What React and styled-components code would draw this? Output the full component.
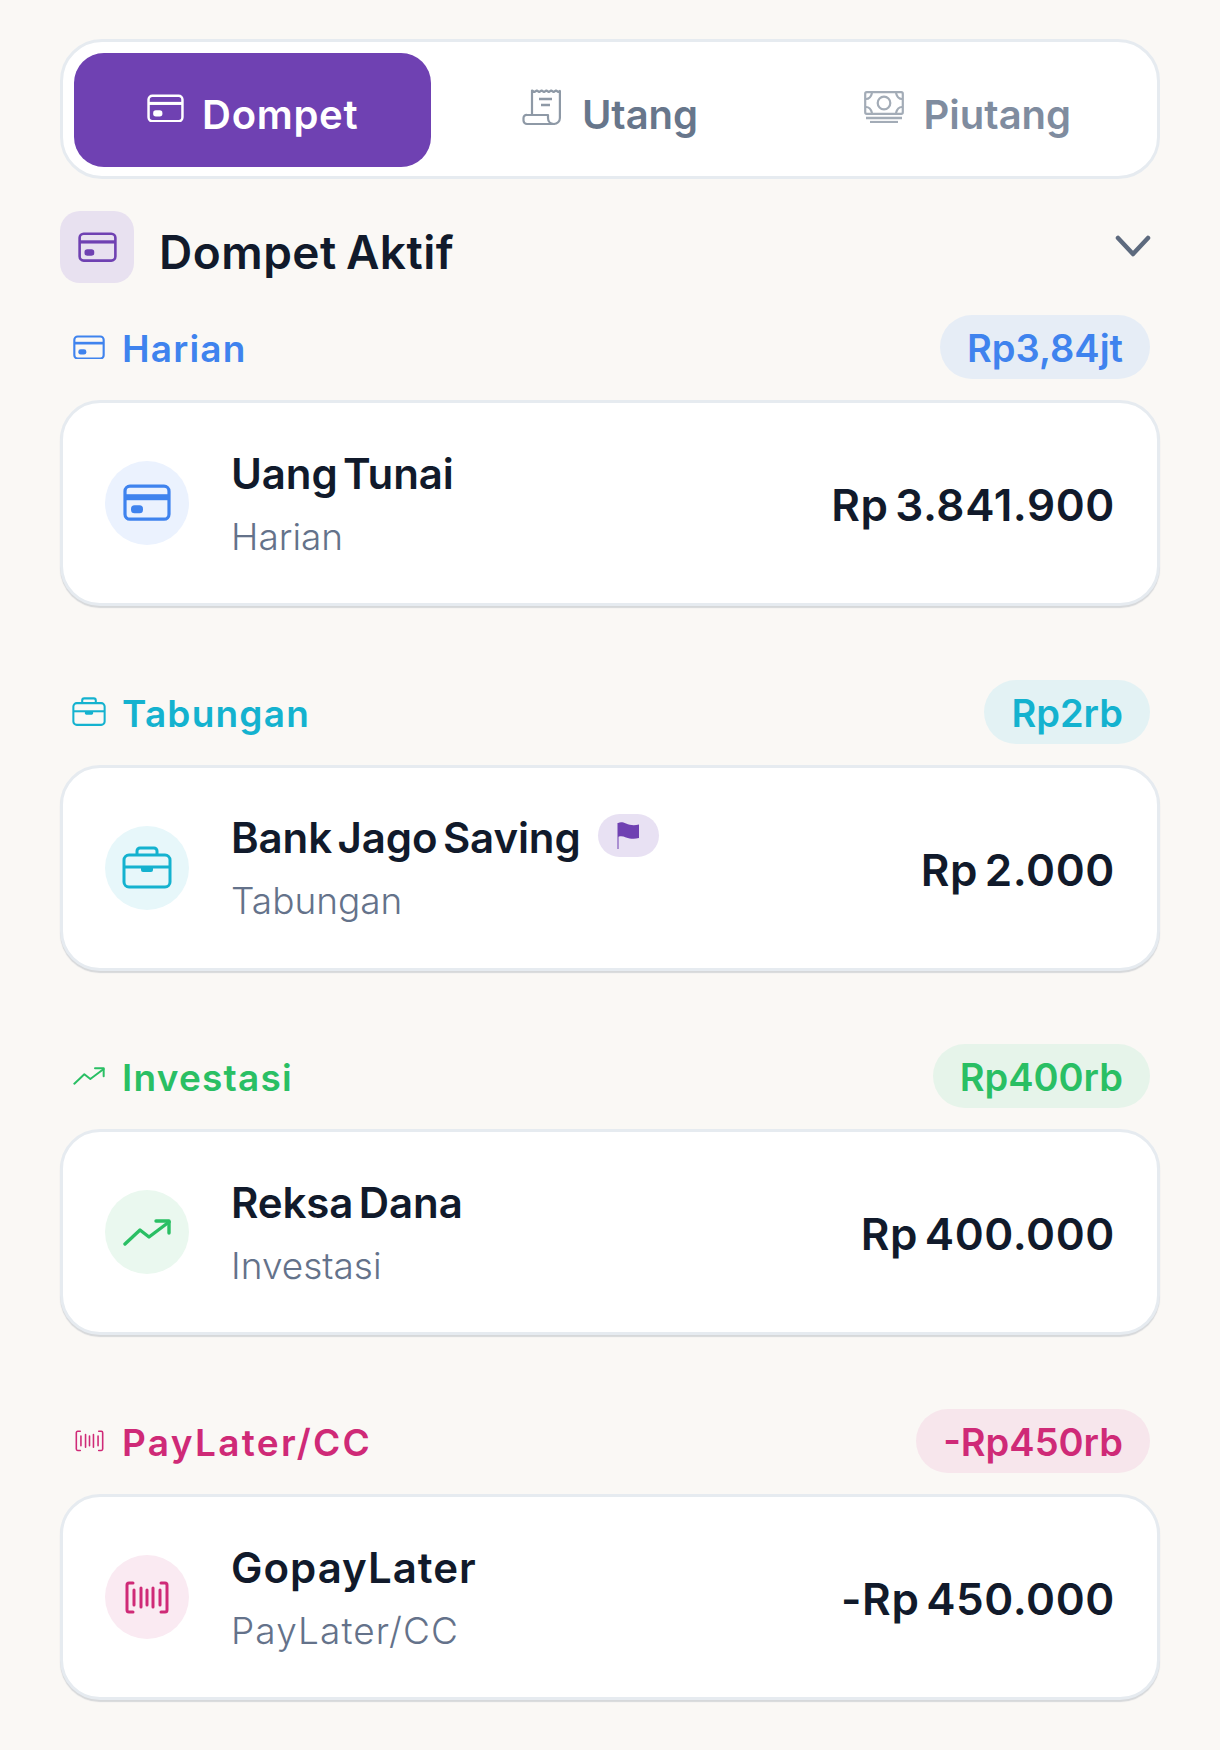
import React from "react";
import styled, { createGlobalStyle } from "styled-components";

const Global = createGlobalStyle`
  html, body { margin: 0; background: #faf8f5; }
  body { font-family: "Inter", "Noto Sans", sans-serif; }
  * { box-sizing: border-box; }
`;

const Page = styled.div`
  width: 1220px;
  height: 1750px;
  padding: 39px 60px 0;
  overflow: hidden;
  background: #faf8f5;
`;
const TabBar = styled.div`
  display: grid;
  grid-template-columns: repeat(3, 1fr);
  height: 140px;
  padding: 11px 11px 9px;
  background: #fff;
  border: 3px solid #e6ebf0;
  border-radius: 42px;
`;
const Tab = styled.div`
  display: flex;
  align-items: center;
  justify-content: center;
  gap: ${p => p.$gap}px;
  border-radius: 30px;
  background: ${p => (p.$active ? "#6f41b2" : "transparent")};
  color: ${p => p.$color};
`;
const TabLabel = styled.span`
  font-size: 40px;
  font-weight: 600;
  letter-spacing: ${p => p.$track}px;
  line-height: 46px;
  padding-top: 10px;
`;
const TabGlyph = styled.span`
  display: flex;
  color: ${p => p.$color};
  margin-top: ${p => p.$top}px;
`;
const SectionHead = styled.div`
  display: flex;
  justify-content: space-between;
  margin-top: 32px;
  height: 72px;
  padding-right: 9px;
`;
const SectionLeft = styled.div`
  display: flex;
  align-items: center;
  gap: 25px;
`;
const SectionIcon = styled.div`
  width: 74px;
  height: 72px;
  border-radius: 20px;
  background: #e8e1f0;
  color: #6f41b2;
  display: flex;
  align-items: center;
  justify-content: center;
`;
const SectionTitle = styled.h2`
  margin: 10px 0 0;
  font-size: 46px;
  font-weight: 600;
  letter-spacing: 0.5px;
  word-spacing: -3px;
  line-height: 54px;
  color: #111a2b;
`;
const Chevron = styled.svg`
  width: 36px;
  height: 22px;
  margin-top: 24px;
  color: #5d6a7e;
`;
const Group = styled.section`
  margin-top: ${p => (p.$first ? 32 : 73.7)}px;
`;
const GroupHead = styled.div`
  display: flex;
  align-items: center;
  justify-content: space-between;
  height: 64px;
  padding: 0 10px 0 13px;
  margin-bottom: 21px;
  color: ${p => p.$color};
`;
const GroupLabel = styled.div`
  display: flex;
  align-items: center;
  gap: 17px;
  font-size: 37px;
  font-weight: 600;
  letter-spacing: ${p => p.$track + 1.2}px;
  line-height: 46px;
`;
const GroupText = styled.span`
  padding-top: 4px;
`;
const GroupIcon = styled.span`
  display: flex;
  width: 32px;
  justify-content: center;
  svg { flex: none; }
`;
const Total = styled.div`
  height: 64px;
  padding: 3px 27px 0;
  border-radius: 32px;
  background: ${p => p.$bg};
  font-size: 38px;
  font-weight: 600;
  line-height: 61px;
`;
const Card = styled.div`
  display: flex;
  align-items: center;
  height: 206px;
  padding: 0 42px;
  background: #fff;
  border: 3px solid #e6ebf0;
  border-radius: 40px;
  box-shadow: 0 2px 1px rgba(30, 50, 80, 0.16);
`;
const Avatar = styled.div`
  flex: none;
  width: 84px;
  height: 84px;
  border-radius: 50%;
  background: ${p => p.$bg};
  color: ${p => p.$color};
  display: flex;
  align-items: center;
  justify-content: center;
`;
const Info = styled.div`
  flex: 1;
  margin-left: 42px;
  display: flex;
  flex-direction: column;
  gap: 14px;
  padding-top: 1px;
`;
const NameRow = styled.div`
  display: flex;
  align-items: flex-start;
  gap: 17px;
`;
const Name = styled.div`
  font-size: 42px;
  font-weight: 600;
  letter-spacing: ${p => p.$track - 0.1}px;
  word-spacing: -5px;
  line-height: 52px;
  color: #111a2b;
`;
const FlagBadge = styled.span`
  width: 61px;
  height: 43px;
  margin-top: 2px;
  border-radius: 22px;
  background: #e8e1f3;
  color: #6f41b2;
  display: flex;
  align-items: center;
  justify-content: center;
`;
const Sub = styled.div`
  font-size: 37px;
  font-weight: 300;
  letter-spacing: ${p => p.$track}px;
  line-height: 46px;
  color: #64728a;
`;
const Amount = styled.div`
  font-size: 44px;
  font-weight: 600;
  letter-spacing: 0.6px;
  word-spacing: -5px;
  line-height: 54px;
  padding-top: 4px;
  color: #111a2b;
`;

const CardIcon = ({ w, thick }) => (
  <svg width={w} height={w * 0.78} viewBox="0 0 48 37" fill="none">
    <rect x="2" y="2" width="44" height="33" rx="5" stroke="currentColor" strokeWidth="3.2" />
    <rect x="2" y="10" width="44" height={thick ? 6 : 4} fill="currentColor" />
    <rect x="8" y="21" width="12" height="8" rx="3.5" fill="currentColor" />
  </svg>
);
const CaseIcon = ({ w }) => (
  <svg width={w} height={w * 0.86} viewBox="0 0 50 43" fill="none" stroke="currentColor" strokeWidth="3">
    <rect x="2" y="9" width="46" height="32" rx="5" />
    <path d="M15 9V5a3 3 0 0 1 3-3h14a3 3 0 0 1 3 3v4" />
    <path d="M2 21h46" />
    <path d="M19 21h12v3a2 2 0 0 1-2 2h-8a2 2 0 0 1-2-2z" fill="currentColor" stroke="none" />
  </svg>
);
const TrendIcon = ({ w, sw }) => (
  <svg width={w} height={w * 0.5625} viewBox="0 0 48 27" fill="none" stroke="currentColor" strokeWidth={sw} strokeLinecap="round" strokeLinejoin="round">
    <path d="M2 25 L17 11 L26 18 L46 3" />
    <path d="M33 2 L46 2 L46 14" />
  </svg>
);
const BarcodeIcon = ({ w, sw }) => (
  <svg width={w} height={w * 0.75} viewBox="0 0 44 33" fill="none" stroke="currentColor" strokeWidth={sw} strokeLinecap="round">
    <path d="M8 2H4a2 2 0 0 0-2 2v25a2 2 0 0 0 2 2h4" />
    <path d="M36 2h4a2 2 0 0 1 2 2v25a2 2 0 0 1-2 2h-4" />
    <path d="M9 9v15M16 7v19M22 9v15M28 7v19M35 9v15" />
  </svg>
);
const ReceiptIcon = () => (
  <svg width="40" height="37" viewBox="0 0 40 37" fill="none" stroke="currentColor" strokeWidth="2.2" strokeLinejoin="round">
    <path d="M10 26V1.500l2.400 1.500 2.400-1.500 2.400 1.500 2.400-1.500 2.400 1.500 2.400-1.500 2.400 1.500 2.400-1.500 2.400 1.500 2.400-1.500 2.400 1.500 1.500-1V29a6 6 0 0 1-6 6" />
    <path d="M5 26h21v3c0 3 2 6 6 6H5a3.500 3.500 0 0 1-3.500-3.500V29A3 3 0 0 1 5 26z" />
    <path d="M17 10h13M19 16h9" strokeWidth="2.400" />
  </svg>
);
const MoneyIcon = () => (
  <svg width="40" height="32" viewBox="0 0 40 32" fill="none" stroke="currentColor" strokeWidth="2.200">
    <rect x="1.200" y="1.200" width="37.600" height="21.600" rx="1.500" />
    <circle cx="20" cy="12" r="6.300" />
    <path d="M2 8c3 0 5-2 6-6M38 8c-3 0-5-2-6-6M2 16c3 0 5 2 6 6M38 16c-3 0-5 2-6 6" />
    <path d="M2 27h36" strokeWidth="2.400" />
    <path d="M6 31h28" strokeWidth="2.200" />
  </svg>
);
const FlagIcon = () => (
  <svg width="23" height="27" viewBox="0 0 23 27" fill="none">
    <path d="M1 1c3-1.200 5-.6 8 .6 4 1.600 8 2.200 13 .9V16c-5 1.400-9 .8-13-.6-3-1-5-1.400-7.500-.6V27H.5V1z" fill="currentColor" />
  </svg>
);

const groups = [
  {
    label: "Harian", total: "Rp3,84jt", color: "#3f83ee", pill: "#e6edf6", soft: "#ebf2fe", track: 0,
    head: <CardIcon w={32} />, icon: <CardIcon w={48} thick />,
    name: "Uang Tunai", amount: "Rp 3.841.900",
  },
  {
    label: "Tabungan", total: "Rp2rb", color: "#14b2cf", pill: "#e3f2f4", soft: "#e7f7fa", track: 0,
    head: <CaseIcon w={34} />, icon: <CaseIcon w={50} />,
    name: "Bank Jago Saving", amount: "Rp 2.000", flag: true,
  },
  {
    label: "Investasi", total: "Rp400rb", color: "#2abf64", pill: "#e6f4ea", soft: "#eaf8ef", track: 0,
    head: <TrendIcon w={32} sw={3} />, icon: <TrendIcon w={48} sw={3.4} />,
    name: "Reksa Dana", amount: "Rp 400.000",
  },
  {
    label: "PayLater/CC", total: "-Rp450rb", color: "#cf2a77", pill: "#f7e6ec", soft: "#faeaf2", track: 1.1,
    head: <BarcodeIcon w={29} sw={2.4} />, icon: <BarcodeIcon w={44} sw={3} />,
    name: "GopayLater", amount: "-Rp 450.000",
  },
];

export default function App() {
  return (
    <Page>
      <Global />
      <TabBar>
        <Tab $active $color="#fff" $gap={18}>
          <TabGlyph $color="#fff" $top={-4}><CardIcon w={37} /></TabGlyph>
          <TabLabel $track={0.7}>Dompet</TabLabel>
        </Tab>
        <Tab $color="#67768b" $gap={20}>
          <TabGlyph $color="#8e99a6" $top={-6}><ReceiptIcon /></TabGlyph>
          <TabLabel $track={0}>Utang</TabLabel>
        </Tab>
        <Tab $color="#7f8c9f" $gap={20}>
          <TabGlyph $color="#a3acb7" $top={-6}><MoneyIcon /></TabGlyph>
          <TabLabel $track={0}>Piutang</TabLabel>
        </Tab>
      </TabBar>
      <SectionHead>
        <SectionLeft>
          <SectionIcon><CardIcon w={39} /></SectionIcon>
          <SectionTitle>Dompet Aktif</SectionTitle>
        </SectionLeft>
        <Chevron viewBox="0 0 36 22" fill="none" stroke="currentColor" strokeWidth="4.500" strokeLinecap="round" strokeLinejoin="round">
          <path d="M3 3 L18 19 L33 3" />
        </Chevron>
      </SectionHead>
      {groups.map((g, i) => (
        <Group key={g.label} $first={i === 0}>
          <GroupHead $color={g.color}>
            <GroupLabel $track={g.track}>
              <GroupIcon>{g.head}</GroupIcon>
              <GroupText>{g.label}</GroupText>
            </GroupLabel>
            <Total $bg={g.pill}>{g.total}</Total>
          </GroupHead>
          <Card>
            <Avatar $bg={g.soft} $color={g.color}>{g.icon}</Avatar>
            <Info>
              <NameRow>
                <Name $track={g.track}>{g.name}</Name>
                {g.flag && <FlagBadge><FlagIcon /></FlagBadge>}
              </NameRow>
              <Sub $track={g.track}>{g.label}</Sub>
            </Info>
            <Amount>{g.amount}</Amount>
          </Card>
        </Group>
      ))}
    </Page>
  );
}
